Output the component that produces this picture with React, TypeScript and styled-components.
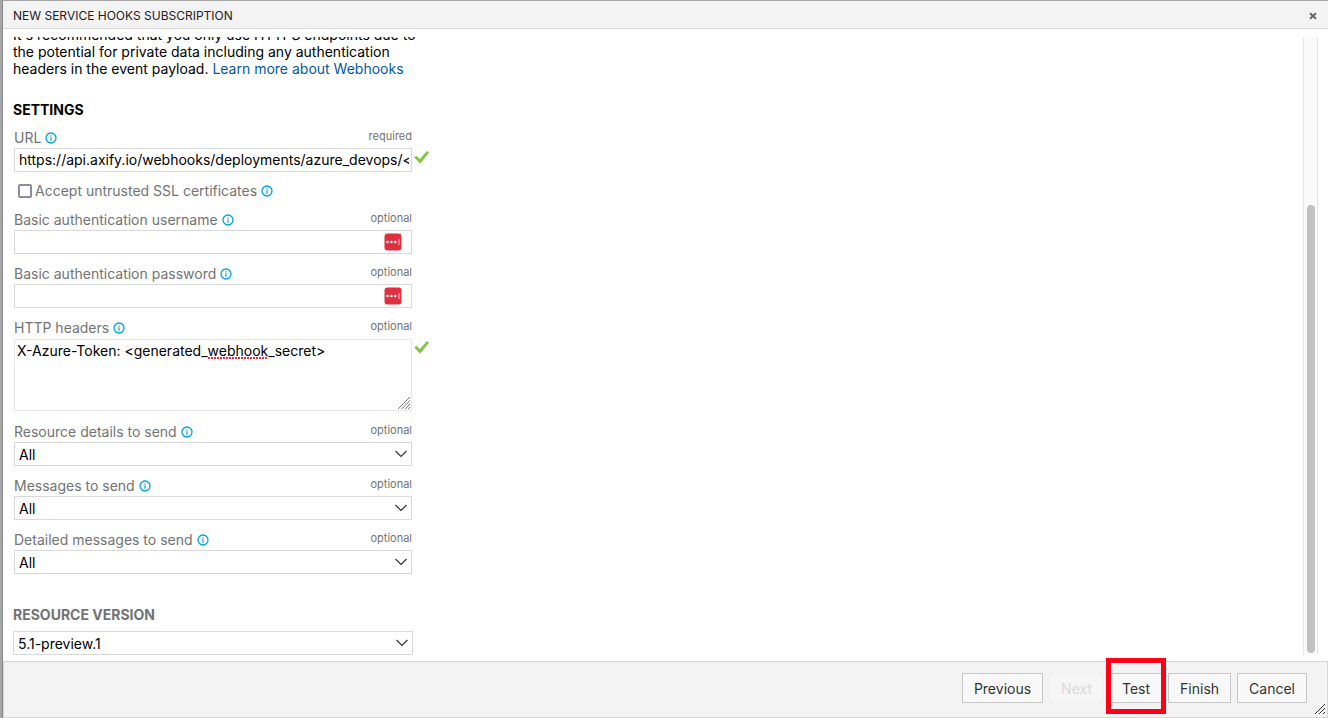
import React, { useLayoutEffect, useRef } from "react";
import styled, { createGlobalStyle } from "styled-components";

const GlobalStyle = createGlobalStyle`
  *, *::before, *::after { box-sizing: border-box; }
  html, body { margin: 0; padding: 0; }
  body, button, input, select, textarea {
    font-family: Inter, "Liberation Sans", sans-serif;
    font-size: 14px;
    color: #000;
  }
`;

const Backdrop = styled.div`
  display: flex;
  height: 100vh;
  padding: 1px 0 0 3px;
  background: #a6a6a6;
`;

const Dialog = styled.section`
  position: relative;
  flex: 1;
  min-width: 0;
  display: flex;
  flex-direction: column;
  background: #fff;
  box-shadow: -1px 0 0 #8a8a8a;
`;

const Header = styled.header`
  display: flex;
  align-items: center;
  justify-content: space-between;
  height: 28px;
  padding: 2px 10px 0;
  background: #f3f3f3;
  border-bottom: 1px solid #dadada;
`;

const Title = styled.h1`
  margin: 0;
  font-size: 12px;
  line-height: 16px;
  font-weight: 400;
  color: #222;
`;

const CloseButton = styled.button`
  display: flex;
  padding: 0;
  border: 0;
  background: none;
`;

const Body = styled.div`
  flex: 1;
  min-height: 0;
  display: flex;
  padding: 8px 10px 6px;
`;

const Scroller = styled.div`
  flex: 1;
  min-width: 0;
  overflow-y: auto;
  scrollbar-width: none;
`;

const Track = styled.div`
  display: flex;
  flex-direction: column;
  justify-content: flex-end;
  width: 15px;
  padding: 0 2px 2px 3px;
  background: #fafafa;
  border: solid #e6e6e6;
  border-width: 0 1px;
`;

const Thumb = styled.div`
  height: calc(100% * 8 / 11);
  border-radius: 4px;
  background: #c1c1c1;
`;

const Column = styled.div`
  width: 420px;
  max-width: 100%;
`;

const Intro = styled.p`
  margin: 0 0 24px;
  line-height: 17px;
`;

const Link = styled.a`
  color: #005a9e;
  text-decoration: none;
`;

const SectionTitle = styled.h2<{ $muted?: boolean }>`
  margin: 0;
  font-size: 14px;
  line-height: 18px;
  font-weight: 700;
  color: ${(p) => (p.$muted ? "#737373" : "#000")};
`;

const FieldList = styled.div`
  display: flex;
  flex-direction: column;
  gap: 10px;
  width: 398px;
  margin: 9px 1px 32px;
`;

const FieldHead = styled.div`
  display: flex;
  justify-content: space-between;
  align-items: flex-start;
  height: 20px;
`;

const LabelGroup = styled.div`
  display: flex;
  align-items: center;
  gap: 4px;
  line-height: 20px;
  color: #737373;
`;

const Note = styled.span`
  font-size: 11px;
  line-height: 17px;
  color: #737373;
`;

const ControlWrap = styled.div`
  position: relative;
  display: flex;
`;

const TextInput = styled.input`
  width: 100%;
  height: 24px;
  padding: 0 2px 1px 4px;
  border: 1px solid #d9d9d9;
  border-radius: 0;
  background: #fff;
`;

const TextArea = styled.textarea`
  width: 100%;
  height: 72px;
  margin: 1px 0;
  padding: 2px;
  border: 1px solid #e6e6e6;
  border-radius: 0;
  line-height: 17px;
  resize: none;
`;

const Select = styled.select`
  width: 100%;
  height: 24px;
  padding: 0 24px 0 4px;
  border: 1px solid #d9d9d9;
  border-radius: 0;
  background: #fff;
  appearance: none;
`;

const Chevron = styled.svg`
  position: absolute;
  right: 4px;
  top: 7px;
  pointer-events: none;
`;

const ValidMark = styled.svg`
  position: absolute;
  left: 100%;
  top: 2px;
  margin-left: 2px;
`;

const ManagerBadge = styled.svg`
  position: absolute;
  right: 10px;
  top: 3px;
`;

const SpellingMark = styled.svg`
  position: absolute;
  left: 194px;
  top: 19px;
  pointer-events: none;
`;

const AreaGrip = styled.svg`
  position: absolute;
  right: 1px;
  bottom: 2px;
  pointer-events: none;
`;

const CheckRow = styled.div`
  display: flex;
  align-items: center;
  gap: 3px;
  height: 18px;
  padding-left: 4px;
`;

const CheckBox = styled.input`
  appearance: none;
  width: 14px;
  height: 14px;
  margin: 0;
  border: 2px solid #8c8c9a;
  border-radius: 2px;
  background: #fff;
`;

const VersionBlock = styled.div`
  width: 400px;
  display: flex;
  flex-direction: column;
  gap: 7px;
`;

const Footer = styled.footer`
  display: flex;
  justify-content: flex-end;
  align-items: flex-start;
  gap: 6px;
  height: 57px;
  padding: 11px 20px 0;
  background: #f3f3f3;
  border: 1px solid #d6d6d6;
`;

const Button = styled.button`
  height: 30px;
  padding: 0 11px;
  border: 1px solid #c8c8c8;
  background: #f8f8f8;
  color: #333;

  &:disabled {
    border-color: #f0f0f0;
    background: #f6f6f6;
    color: #dadada;
  }
`;

const Highlight = styled.div`
  position: relative;

  &::after {
    content: "";
    position: absolute;
    inset: -15px -4px -11px -4px;
    border: 5px solid #ff0019;
    pointer-events: none;
  }
`;

const DialogGrip = styled.svg`
  position: absolute;
  right: 2px;
  bottom: 3px;
`;

const InfoIcon = () => (
  <svg width="12" height="12" viewBox="0 0 12 12" fill="none" aria-hidden="true">
    <circle cx="6" cy="6" r="5" stroke="#00a2e0" strokeWidth="1.3" />
    <path d="M6 5.2v3.6M6 3.2v1.2" stroke="#00a2e0" strokeWidth="1.2" />
  </svg>
);

const Check = () => (
  <ValidMark width="16" height="16" viewBox="0 0 16 16" aria-label="Valid">
    <path d="M0.2 7.6 2.4 5.8 5.9 9 12.9 1 15.2 2.6 6.2 13.8Z" fill="#86c44c" />
  </ValidMark>
);

const Badge = () => (
  <ManagerBadge width="18" height="18" viewBox="0 0 18 18" aria-hidden="true">
    <rect x="0.5" y="0.5" width="17" height="17" rx="3" fill="#e0303f" />
    <circle cx="3.6" cy="9" r="1.3" fill="#fff" />
    <circle cx="7.4" cy="9" r="1.3" fill="#fff" />
    <circle cx="11.2" cy="9" r="1.3" fill="#fff" />
    <path d="M15 6v6" stroke="#f7bcc2" strokeWidth="1" />
  </ManagerBadge>
);

type FieldProps = {
  id: string;
  label: string;
  note?: string;
  children: React.ReactNode;
};

const Field = ({ id, label, note = "optional", children }: FieldProps) => (
  <div>
    <FieldHead>
      <LabelGroup>
        <label htmlFor={id}>{label}</label>
        <InfoIcon />
      </LabelGroup>
      <Note>{note}</Note>
    </FieldHead>
    <ControlWrap>{children}</ControlWrap>
  </div>
);

const DropDown = ({ id, value }: { id: string; value: string }) => (
  <>
    <Select id={id} defaultValue={value}>
      <option>{value}</option>
    </Select>
    <Chevron width="14" height="10" viewBox="0 0 14 10" fill="none" aria-hidden="true">
      <path d="M1.5 2 7 7.5 12.5 2" stroke="#333" strokeWidth="1.2" />
    </Chevron>
  </>
);

export default function App() {
  const scroller = useRef<HTMLDivElement>(null);

  useLayoutEffect(() => {
    const el = scroller.current;
    if (el) el.scrollTop = el.scrollHeight;
  }, []);

  return (
    <Backdrop>
      <GlobalStyle />
      <Dialog role="dialog" aria-labelledby="dialog-title">
        <Header>
          <Title id="dialog-title">NEW SERVICE HOOKS SUBSCRIPTION</Title>
          <CloseButton type="button" aria-label="Close">
            <svg width="10" height="8" viewBox="0 0 10 8" fill="none">
              <path d="M2 1.2 8 6.8M8 1.2 2 6.8" stroke="#666" strokeWidth="2" />
            </svg>
          </CloseButton>
        </Header>

        <Body>
          <Scroller ref={scroller}>
            <Column>
              <Intro>
                It's recommended that you only use HTTPS endpoints due to the potential for private data
                including any authentication headers in the event payload.{" "}
                <Link href="#webhooks">Learn more about Webhooks</Link>
              </Intro>

              <SectionTitle>SETTINGS</SectionTitle>
              <FieldList>
                <Field id="url" label="URL" note="required">
                  <TextInput
                    id="url"
                    type="text"
                    defaultValue="https://api.axify.io/webhooks/deployments/azure_devops/<generated_id>"
                  />
                  <Check />
                </Field>
                <CheckRow>
                  <CheckBox id="ssl" type="checkbox" />
                  <LabelGroup>
                    <label htmlFor="ssl">Accept untrusted SSL certificates</label>
                    <InfoIcon />
                  </LabelGroup>
                </CheckRow>
                <Field id="username" label="Basic authentication username">
                  <TextInput id="username" type="text" />
                  <Badge />
                </Field>
                <Field id="password" label="Basic authentication password">
                  <TextInput id="password" type="password" />
                  <Badge />
                </Field>
                <Field id="headers" label="HTTP headers">
                  <TextArea
                    id="headers"
                    spellCheck={false}
                    defaultValue="X-Azure-Token: <generated_webhook_secret>"
                  />
                  <SpellingMark width="59" height="2" viewBox="0 0 59 2" aria-hidden="true">
                    <path d="M0 1H59" stroke="#e8274b" strokeWidth="2" strokeDasharray="2 1" />
                  </SpellingMark>
                  <AreaGrip width="14" height="14" viewBox="0 0 14 14" fill="none" aria-hidden="true">
                    <path d="M1 13 13 1M4.5 13 13 4.5M8 13 13 8M11 13 13 11" stroke="#777" />
                  </AreaGrip>
                  <Check />
                </Field>
                <Field id="resource" label="Resource details to send">
                  <DropDown id="resource" value="All" />
                </Field>
                <Field id="messages" label="Messages to send">
                  <DropDown id="messages" value="All" />
                </Field>
                <Field id="detailed" label="Detailed messages to send">
                  <DropDown id="detailed" value="All" />
                </Field>
              </FieldList>

              <VersionBlock>
                <SectionTitle $muted>
                  <label htmlFor="version">RESOURCE VERSION</label>
                </SectionTitle>
                <ControlWrap>
                  <DropDown id="version" value="5.1-preview.1" />
                </ControlWrap>
              </VersionBlock>
            </Column>
          </Scroller>
          <Track>
            <Thumb />
          </Track>
        </Body>

        <Footer>
          <Button type="button">Previous</Button>
          <Button type="button" disabled>
            Next
          </Button>
          <Highlight>
            <Button type="button">Test</Button>
          </Highlight>
          <Button type="button">Finish</Button>
          <Button type="button">Cancel</Button>
        </Footer>
        <DialogGrip width="12" height="12" viewBox="0 0 12 12" fill="none" aria-hidden="true">
          <path d="M1 11 11 1M5 11 11 5M9 11 11 9" stroke="#333" />
        </DialogGrip>
      </Dialog>
    </Backdrop>
  );
}
